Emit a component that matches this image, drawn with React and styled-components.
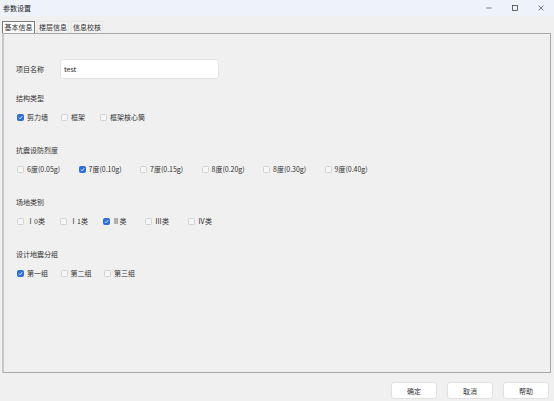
import React, { useState } from 'react';
import styled, { createGlobalStyle } from 'styled-components';

const GlobalStyle = createGlobalStyle`
  html, body {
    margin: 0;
    padding: 0;
    background: #f0f0f0;
  }
  body {
    font-family: "Noto Sans CJK SC", "Noto Sans", "Liberation Sans", sans-serif;
    color: #333;
  }
`;

const Window = styled.div`
  width: 554px;
  height: 401px;
  display: flex;
  flex-direction: column;
  background: #f0f0f0;
  overflow: hidden;
`;

const TitleBar = styled.div`
  height: 16px;
  flex-shrink: 0;
  display: flex;
  align-items: center;
  justify-content: space-between;
  background: #eef2fa;
  padding-left: 3px;
  font-size: 7px;
  color: #222;
`;

const Controls = styled.div`
  display: flex;
  align-items: center;
  height: 100%;
`;

const ControlButton = styled.div`
  width: 26px;
  height: 100%;
  display: flex;
  align-items: center;
  justify-content: center;
  color: #333;
`;

const TabRow = styled.div`
  display: flex;
  gap: 2px;
  margin-top: 5px;
  padding-left: 2px;
  height: 12px;
  flex-shrink: 0;
`;

const Tab = styled.div`
  height: 12px;
  box-sizing: border-box;
  padding: ${(p) => (p.$active ? '0 1.5px' : '0 1px')};
  font-size: 7px;
  line-height: 10px;
  border: 1px solid ${(p) => (p.$active ? '#7c7c7c' : '#e6e6e6')};
  border-bottom: none;
  background: ${(p) => (p.$active ? '#fbfbfb' : '#f4f4f4')};
  color: #333;
  cursor: default;
`;

const Panel = styled.div`
  height: 340px;
  flex-shrink: 0;
  box-sizing: border-box;
  margin: 0 3px 0 2px;
  border: 1px solid #a8a8a8;
  border-left: 2px solid #c6c6c6;
  padding: 25px 12px 0 12px;
  background: #f0f0f0;
`;

const NameRow = styled.div`
  display: flex;
  align-items: center;
  height: 20px;
`;

const FieldLabel = styled.div`
  width: 44px;
  font-size: 7px;
  line-height: 10px;
  color: #333;
`;

const TextInput = styled.input`
  width: 159px;
  height: 20px;
  box-sizing: border-box;
  border: 1px solid #e4e4e4;
  border-radius: 3px;
  background: #fff;
  padding: 0 3px;
  font-family: inherit;
  font-size: 7px;
  color: #222;
  outline: none;
`;

const Section = styled.div`
  margin-top: ${(p) => p.$top}px;
`;

const SectionTitle = styled.div`
  height: 10px;
  font-size: 7px;
  line-height: 10px;
  color: #333;
`;

const OptionRow = styled.div`
  display: flex;
  margin-top: 9px;
  height: 10px;
  padding-left: 1px;
`;

const Option = styled.label`
  display: flex;
  align-items: center;
  width: ${(p) => (p.$width ? `${p.$width}px` : 'auto')};
  flex-shrink: 0;
  font-size: 7px;
  line-height: 10px;
  color: #333;
  cursor: default;
`;

const Box = styled.span`
  width: 7px;
  height: 7px;
  box-sizing: border-box;
  border-radius: 1.5px;
  margin-right: 3px;
  display: flex;
  align-items: center;
  justify-content: center;
  border: 1px solid ${(p) => (p.$checked ? '#2f6fd6' : '#d2d2d2')};
  background: ${(p) => (p.$checked ? '#2f6fd6' : '#f6f6f6')};
`;

const Footer = styled.div`
  display: flex;
  justify-content: flex-end;
  gap: 10px;
  margin-top: 9px;
  padding-right: 5px;
`;

const Button = styled.button`
  width: 46px;
  height: 17px;
  box-sizing: border-box;
  border: 1px solid #e2e2e2;
  border-radius: 3px;
  background: #fff;
  font-family: inherit;
  font-size: 7px;
  color: #333;
  padding: 0;
  cursor: default;
`;

function CheckOption({ label, checked, width, onToggle }) {
  return (
    <Option $width={width} onClick={onToggle}>
      <Box $checked={checked}>
        {checked && (
          <svg width="5" height="5" viewBox="0 0 10 10">
            <path d="M2 5.2 L4.2 7.4 L8.2 2.6" fill="none" stroke="#fff" strokeWidth="1.8" />
          </svg>
        )}
      </Box>
      {label}
    </Option>
  );
}

const groups = [
  {
    title: '结构类型',
    top: 14,
    widths: [44, 39, 0],
    options: ['剪力墙', '框架', '框架核心筒'],
    initial: 0,
  },
  {
    title: '抗震设防烈度',
    top: 23,
    widths: [61.5, 61.5, 61.5, 61.5, 61.5, 0],
    options: ['6度(0.05g)', '7度(0.10g)', '7度(0.15g)', '8度(0.20g)', '8度(0.30g)', '9度(0.40g)'],
    initial: 1,
  },
  {
    title: '场地类别',
    top: 23,
    widths: [43, 42.5, 42.5, 43, 0],
    options: ['Ⅰ0类', 'Ⅰ1类', 'Ⅱ类', 'Ⅲ类', 'Ⅳ类'],
    initial: 2,
  },
  {
    title: '设计地震分组',
    top: 23,
    widths: [43.5, 43.5, 0],
    options: ['第一组', '第二组', '第三组'],
    initial: 0,
  },
];

export default function App() {
  const [tab, setTab] = useState(0);
  const [name, setName] = useState('test');
  const [selected, setSelected] = useState(groups.map((g) => g.initial));

  const pick = (gi, oi) => {
    setSelected((s) => s.map((v, i) => (i === gi ? oi : v)));
  };

  return (
    <Window>
      <GlobalStyle />
      <TitleBar>
        <span>参数设置</span>
        <Controls>
          <ControlButton>
            <svg width="6" height="6" viewBox="0 0 10 10">
              <path d="M0.5 5 H9.5" stroke="#333" strokeWidth="1" />
            </svg>
          </ControlButton>
          <ControlButton>
            <svg width="6" height="6" viewBox="0 0 10 10">
              <rect x="1" y="1" width="8" height="8" fill="none" stroke="#333" strokeWidth="1.2" />
            </svg>
          </ControlButton>
          <ControlButton>
            <svg width="6" height="6" viewBox="0 0 10 10">
              <path d="M1 1 L9 9 M9 1 L1 9" stroke="#333" strokeWidth="1.1" />
            </svg>
          </ControlButton>
        </Controls>
      </TitleBar>

      <TabRow>
        {['基本信息', '楼层信息', '信息校核'].map((t, i) => (
          <Tab key={t} $active={tab === i} onClick={() => setTab(i)}>
            {t}
          </Tab>
        ))}
      </TabRow>

      <Panel>
        <NameRow>
          <FieldLabel>项目名称</FieldLabel>
          <TextInput value={name} onChange={(e) => setName(e.target.value)} />
        </NameRow>

        {groups.map((g, gi) => (
          <Section key={g.title} $top={g.top}>
            <SectionTitle>{g.title}</SectionTitle>
            <OptionRow>
              {g.options.map((o, oi) => (
                <CheckOption
                  key={o}
                  label={o}
                  width={g.widths[oi]}
                  checked={selected[gi] === oi}
                  onToggle={() => pick(gi, oi)}
                />
              ))}
            </OptionRow>
          </Section>
        ))}
      </Panel>

      <Footer>
        <Button>确定</Button>
        <Button>取消</Button>
        <Button>帮助</Button>
      </Footer>
    </Window>
  );
}
